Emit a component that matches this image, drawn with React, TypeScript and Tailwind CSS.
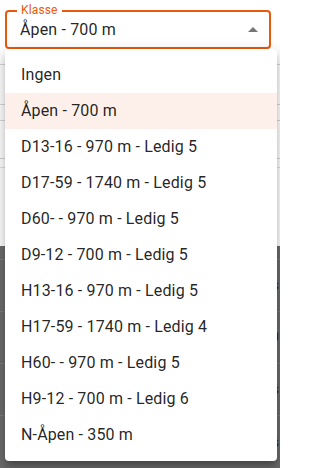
import React from "react";

const items = [
  "Ingen",
  "Åpen - 700 m",
  "D13-16 - 970 m - Ledig 5",
  "D17-59 - 1740 m - Ledig 5",
  "D60- - 970 m - Ledig 5",
  "D9-12 - 700 m - Ledig 5",
  "H13-16 - 970 m - Ledig 5",
  "H17-59 - 1740 m - Ledig 4",
  "H60- - 970 m - Ledig 5",
  "H9-12 - 700 m - Ledig 6",
  "N-Åpen - 350 m",
];

export default function App() {
  return (
    <div className="relative w-[280px] h-[468px] overflow-hidden bg-white font-['Roboto',sans-serif]">
      {/* backdrop page */}
      <div className="absolute inset-0 flex flex-col">
        <div className="h-[66px] border-b border-[#d6d6d6]" />
        <div className="h-[41px] border-b border-[#d6d6d6]" />
        <div className="h-[16px] border-b border-[#d6d6d6]" />
        <div className="h-[39px] border-b border-[#d6d6d6]" />
        <div className="h-[9px] border-b border-[#e2e2e2]" />
        <div className="h-[79px]" />
        <div className="flex-1 flex flex-col bg-[#6c6c6c]">
          <div className="h-[14px] border-b border-[#7a7a7a]" />
          <div className="h-[52px] border-b border-[#7a7a7a] flex items-center justify-end pr-[1px] text-[#2a2a2a] text-[15px]">s</div>
          <div className="h-[52px] border-b border-[#7a7a7a] flex items-center justify-end pr-[1px] text-[#2a2a2a] text-[15px]">0</div>
          <div className="h-[52px] border-b border-[#7a7a7a] flex items-center justify-end pr-[1px] text-[#2a2a2a] text-[15px]">s</div>
          <div className="h-[52px] flex items-center justify-end pr-[1px] text-[#2a2a2a] text-[15px]">s</div>
        </div>
      </div>

      {/* select field */}
      <div className="relative pt-[10px] px-[5px] w-[276px]">
        <div className="relative h-[39px] rounded-[4px] border-2 border-[#e8590c] bg-white flex items-center pl-[13px] pr-[4px]">
          <span className="absolute -top-[9px] left-[10px] px-[4px] bg-white text-[12px] leading-[14px] tracking-[0.15px] text-[#e8590c]">
            Klasse
          </span>
          <span className="flex-1 text-[16px] tracking-[0.15px] text-[rgba(0,0,0,0.87)] leading-[20px]">Åpen - 700 m</span>
          <svg width="24" height="24" viewBox="0 0 24 24" className="fill-[#757575]">
            <path d="M7 14l5-5 5 5z" />
          </svg>
        </div>
      </div>

      {/* dropdown menu */}
      <div className="absolute left-[5px] top-[49px] w-[272px] rounded-[4px] bg-white py-2 shadow-[0px_5px_5px_-3px_rgba(0,0,0,0.2),0px_8px_10px_1px_rgba(0,0,0,0.14),0px_3px_14px_2px_rgba(0,0,0,0.12)]">
        {items.map((t) => (
          <div
            key={t}
            className={
              t === "Åpen - 700 m"
                ? "h-9 px-4 flex items-center text-[16px] tracking-[0.15px] text-[rgba(0,0,0,0.87)] bg-[#fdf0ea]"
                : "h-9 px-4 flex items-center text-[16px] tracking-[0.15px] text-[rgba(0,0,0,0.87)]"
            }
          >
            {t}
          </div>
        ))}
      </div>
    </div>
  );
}
